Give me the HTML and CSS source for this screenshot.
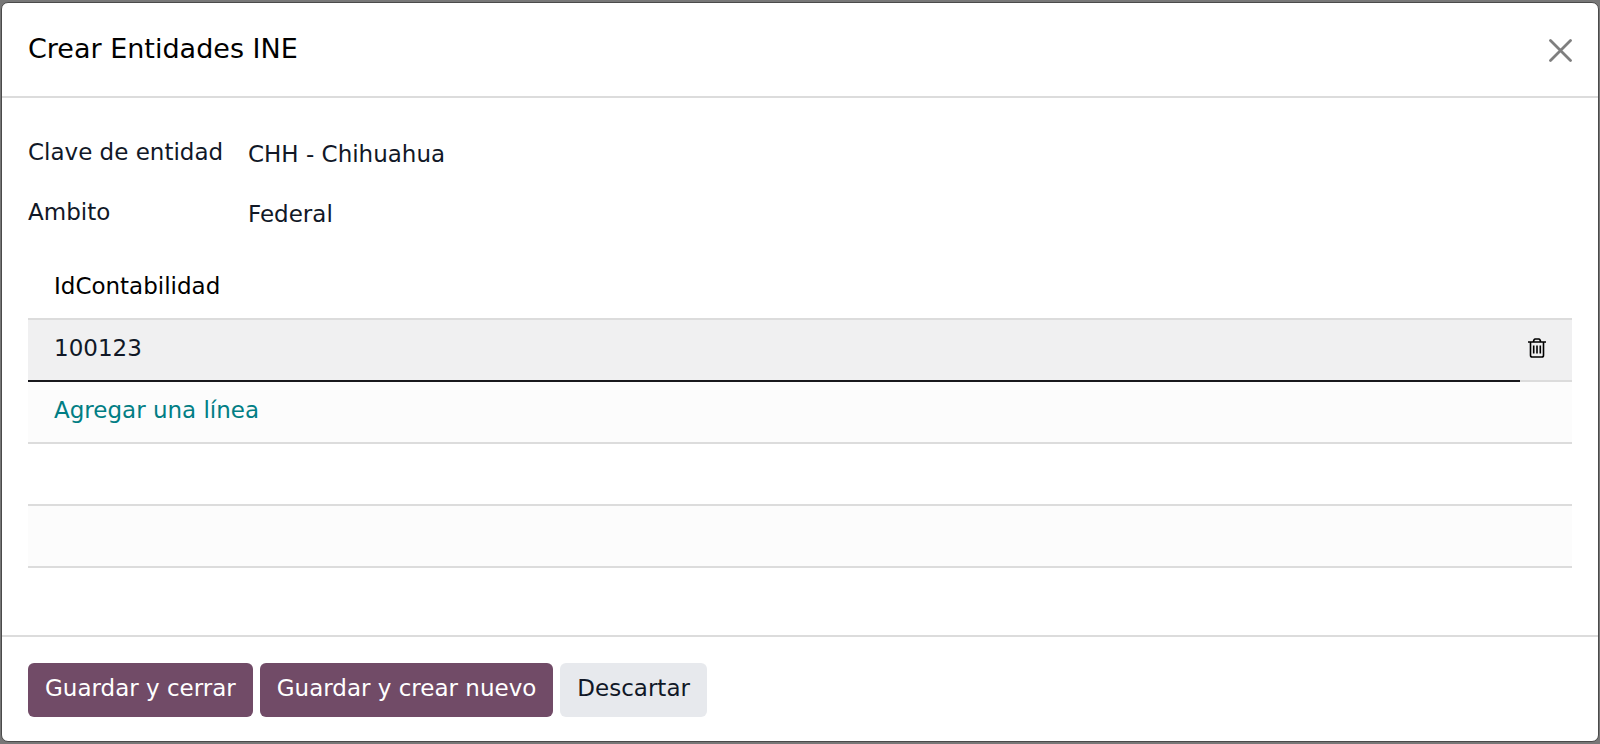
FILE: index.html
```html
<!DOCTYPE html>
<html lang="es">
<head>
<meta charset="utf-8">
<meta name="viewport" content="width=device-width, initial-scale=1">
<title>Crear Entidades INE</title>
<link rel="stylesheet" href="styles.css">
</head>
<body>
<form class="modal" role="dialog" aria-labelledby="modal-title">
  <header class="modal-header">
    <h1 class="modal-title" id="modal-title">Crear Entidades INE</h1>
    <button class="close" type="button" aria-label="Cerrar">
      <svg width="24" height="24" viewBox="0 0 24 24" fill="none" stroke="currentColor" stroke-width="2.8" stroke-linecap="round"><path d="M2.500 1.500 22.500 21.500M22.500 1.500 2.500 21.500"/></svg>
    </button>
  </header>
  <main class="modal-body">
    <div class="fields">
      <label class="label" for="clave">Clave de entidad</label>
      <input class="field" id="clave" type="text" value="CHH - Chihuahua">
      <label class="label" for="ambito">Ambito</label>
      <input class="field" id="ambito" type="text" value="Federal">
    </div>
    <table class="list">
      <thead>
        <tr><th class="cell" id="col-id" scope="col">IdContabilidad</th><th class="action"></th></tr>
      </thead>
      <tbody>
        <tr class="selected">
          <td class="cell editing"><input class="cell-input" type="text" value="100123" aria-labelledby="col-id"></td>
          <td class="action">
            <button class="trash" type="button" aria-label="Eliminar">
              <svg width="18" height="20" viewBox="0 0 18 20" fill="none" stroke="currentColor" stroke-width="1.6"><path d="M0 4h18M2.500 4v13.200q0 1.800 1.700 1.800h9.600q1.700 0 1.700-1.800V4M5.200 4 6 1.900q.4-.9 1.300-.9h3.400q.9 0 1.300.9l.8 2.100M5.700 7.500v8M9 7.500v8M12.300 7.500v8"/></svg>
            </button>
          </td>
        </tr>
        <tr class="shaded"><td class="cell" colspan="2"><a class="add" href="#">Agregar una línea</a></td></tr>
        <tr><td class="cell" colspan="2"></td></tr>
        <tr class="shaded"><td class="cell" colspan="2"></td></tr>
      </tbody>
    </table>
  </main>
  <footer class="modal-footer">
    <button class="btn primary" type="button">Guardar y cerrar</button>
    <button class="btn primary" type="button">Guardar y crear nuevo</button>
    <button class="btn secondary" type="button">Descartar</button>
  </footer>
</form>
</body>
</html>
```
FILE: styles.css
```css
* { box-sizing: border-box; }

body {
  margin: 0;
  min-height: 100vh;
  padding: 2px 1px;
  background: #777;
  color: #111827;
  font: 23px/30px "DejaVu Sans", sans-serif;
}

button, input { font: inherit; color: inherit; }

.modal {
  background: #fff;
  border: 1px solid #4a4a4a;
  border-radius: 7px;
}

.modal-header {
  display: flex;
  align-items: center;
  justify-content: space-between;
  padding: 25px 26px 27px;
  border-bottom: 2px solid #dcdcdc;
}

.modal-title {
  margin: 0;
  color: #000;
  font-size: 27px;
  font-weight: 400;
  line-height: 41px;
}

.close {
  display: flex;
  padding: 4px 0 0;
  border: 0;
  background: none;
  color: #7f7f7f;
}

.modal-body { padding: 34px 26px 67px; }

.fields {
  display: grid;
  grid-template-columns: 220px 1fr;
  row-gap: 16px;
  margin-bottom: 22px;
}

.label { padding: 5px 0 9px; }

.field {
  width: 100%;
  height: 44px;
  padding: 0;
  border: 0;
  background: none;
  outline: 0;
}

.list {
  width: 100%;
  border-collapse: separate;
  border-spacing: 0;
  table-layout: fixed;
}

.cell, .action {
  height: 62px;
  padding: 0 26px 4px;
  border-bottom: 2px solid #dcdcdc;
  font-weight: 400;
  text-align: left;
}

th.cell { color: #000; }

.action {
  width: 52px;
  padding: 0 0 4px;
}

.selected { background: #f0f0f1; }
.shaded { background: #fcfcfc; }
.editing { border-bottom-color: #18181c; }

.cell-input {
  display: block;
  width: 100%;
  height: 30px;
  padding: 0;
  border: 0;
  background: none;
  outline: 0;
}

.trash {
  display: flex;
  margin-left: 8px;
  padding: 0;
  border: 0;
  background: none;
  color: #000;
}

.add {
  color: #017e84;
  text-decoration: none;
}

.modal-footer {
  display: flex;
  flex-wrap: wrap;
  gap: 7px;
  padding: 26px 26px 24px;
  border-top: 2px solid #dcdcdc;
}

.btn {
  padding: 10px 17px 14px;
  border: 0;
  border-radius: 6px;
}

.primary { background: #714b67; color: #fff; }
.secondary { background: #e7e9ed; }
```
